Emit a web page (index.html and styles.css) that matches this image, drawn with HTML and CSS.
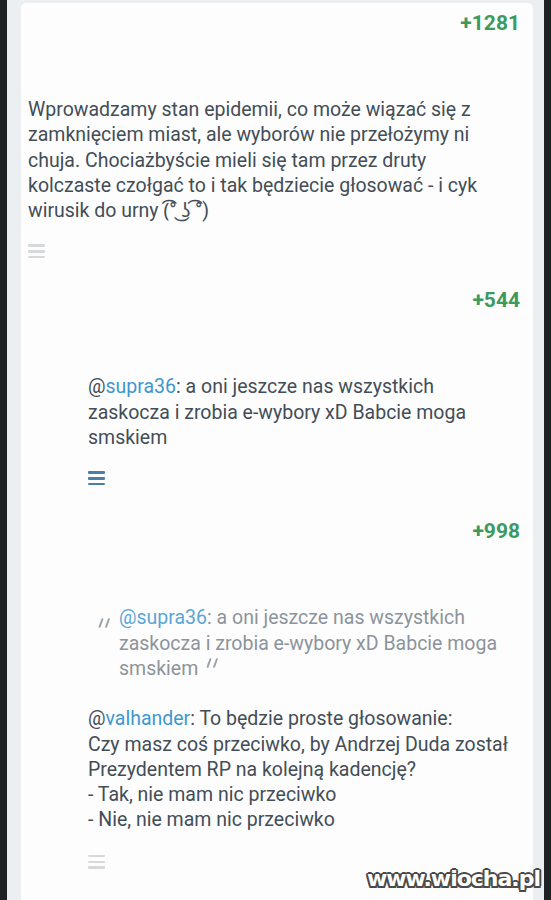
FILE: index.html
```html
<!DOCTYPE html>
<html lang="pl">
<head>
<meta charset="utf-8">
<link rel="stylesheet" href="styles.css">
</head>
<body>
<div class="frame">
  <div class="card">
    <div class="comment">
      <div class="score">+1281</div>
      <div class="body">Wprowadzamy stan epidemii, co może wiązać się z zamknięciem miast, ale wyborów nie przełożymy ni chuja. Chociażbyście mieli się tam przez druty kolczaste czołgać to i tak będziecie głosować - i cyk wirusik do urny (͡° ͜ʖ ͡°)</div>
      <div class="menu gray"><span></span><span></span><span></span></div>
    </div>
    <div class="comment reply c2">
      <div class="score">+544</div>
      <div class="body"><span class="at">@</span><span class="mention">supra36</span>: a oni jeszcze nas wszystkich zaskocza i zrobia e-wybory xD Babcie moga smskiem</div>
      <div class="menu blue"><span></span><span></span><span></span></div>
    </div>
    <div class="comment reply c3">
      <div class="score">+998</div>
      <div class="body">
        <div class="quote">
          <svg class="qmark open" viewBox="0 0 12 9" width="13" height="10"><path d="M4 1 L1.5 8 M10 1 L7.5 8" stroke="#9aa1a7" stroke-width="1.8" stroke-linecap="round"/></svg>
          <div class="qtext"><span class="mention">@supra36</span>: a oni jeszcze nas wszystkich zaskocza i zrobia e-wybory xD Babcie moga smskiem<svg class="qmark close" viewBox="0 0 12 9" width="13" height="10"><path d="M4 1 L1.5 8 M10 1 L7.5 8" stroke="#9aa1a7" stroke-width="1.8" stroke-linecap="round"/></svg></div>
        </div>
        <div class="answer"><span class="at">@</span><span class="mention">valhander</span>: To będzie proste głosowanie:<br>Czy masz coś przeciwko, by Andrzej Duda został Prezydentem RP na kolejną kadencję?<br>- Tak, nie mam nic przeciwko<br>- Nie, nie mam nic przeciwko</div>
      </div>
      <div class="menu gray"><span></span><span></span><span></span></div>
    </div>
    <div class="watermark">www.wiocha.pl</div>
  </div>
</div>
</body>
</html>
```
FILE: styles.css
```css
html, body {
  margin: 0;
  padding: 0;
}
body {
  background: #1f2225;
  width: 551px;
  height: 900px;
  overflow: hidden;
  font-family: Roboto, "Noto Sans", "DejaVu Sans", sans-serif;
}
.frame {
  margin: 0 7px 0 7px;
  background: #eceff1;
  height: 900px;
  padding: 3px 11px 0 14px;
  box-sizing: border-box;
}
.card {
  position: relative;
  background: #fdfdfd;
  border-radius: 5px 5px 0 0;
  height: 897px;
  padding: 8px 13px 0 7px;
  box-sizing: border-box;
}
.comment {
  display: flex;
  flex-direction: column;
}
.c2 { margin-top: 30px; }
.c3 { margin-top: 34px; }
.score {
  align-self: flex-end;
  font-size: 21px;
  line-height: 25px;
  font-weight: 700;
  color: #3c9a5f;
}
.body {
  margin-top: 61px;
  font-size: 19.5px;
  line-height: 25.3px;
  color: #434d57;
  width: 470px;
}
.reply .body {
  margin-left: 60px;
  width: 424px;
}
.at { color: #434d57; }
.mention { color: #3f97cf; }
.menu {
  margin-top: 21px;
  width: 17px;
  height: 14px;
  display: flex;
  flex-direction: column;
  justify-content: space-between;
}
.reply .menu { margin-left: 60px; }
.menu span {
  display: block;
  height: 2.5px;
  border-radius: 1px;
}
.menu.gray span { background: #d6d9dc; }
.menu.blue span { background: #4a7fa7; }
.c3 .menu { margin-top: 22px; }
.quote {
  display: flex;
  align-items: flex-start;
  color: #8c949b;
}
.quote .mention { color: #5aa6d8; }
.qmark.open {
  flex: none;
  margin: 13px 8px 0 10px;
}
.qtext {
  width: 395px;
}
.qmark.close {
  vertical-align: 7px;
  margin-left: 8px;
}
.answer {
  margin-top: 25px;
}
.watermark {
  position: absolute;
  right: -7px;
  bottom: 9px;
  font-family: "DejaVu Sans", sans-serif;
  font-weight: 700;
  font-size: 22px;
  letter-spacing: -1px;
  color: #ffffff;
  text-shadow: 2px 0 0 #4a4a4a, -2px 0 0 #4a4a4a, 0 2px 0 #4a4a4a, 0 -2px 0 #4a4a4a, 1.5px 1.5px 0 #4a4a4a, -1.5px 1.5px 0 #4a4a4a, 1.5px -1.5px 0 #4a4a4a, -1.5px -1.5px 0 #4a4a4a;
}
```
